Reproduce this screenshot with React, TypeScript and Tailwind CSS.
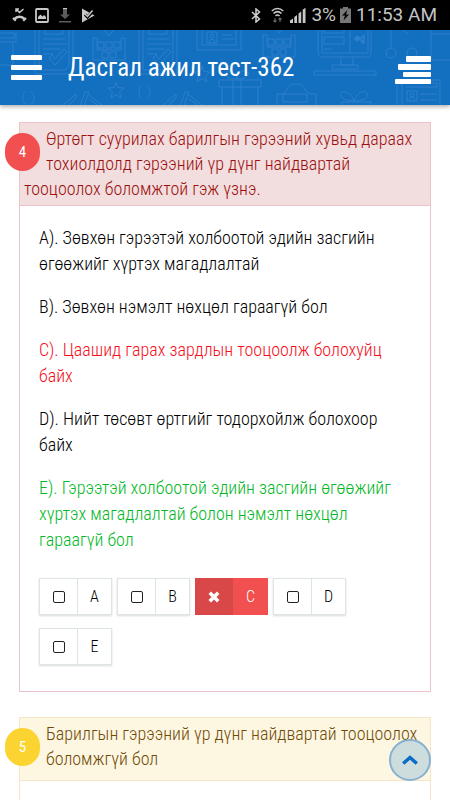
import type { ReactNode } from "react";
import clsx from "clsx";

interface Answer {
  letter: string;
  text: string;
  state?: "wrong" | "correct";
}

const answers: Answer[] = [
  { letter: "A", text: "Зөвхөн гэрээтэй холбоотой эдийн засгийн өгөөжийг хүртэх магадлалтай" },
  { letter: "B", text: "Зөвхөн нэмэлт нөхцөл гараагүй бол" },
  { letter: "C", text: "Цаашид гарах зардлын тооцоолж болохуйц байх", state: "wrong" },
  { letter: "D", text: "Нийт төсөвт өртгийг тодорхойлж болохоор байх" },
  {
    letter: "E",
    text: "Гэрээтэй холбоотой эдийн засгийн өгөөжийг хүртэх магадлалтай болон нэмэлт нөхцөл гараагүй бол",
    state: "correct",
  },
];

const StatusBar = () => (
  <div className="flex h-[30px] shrink-0 items-center justify-between bg-black pl-3 pr-[13px] font-['Roboto'] text-[19px] text-[#c4c4c4]">
    <div className="flex items-center gap-2">
      <svg width="15" height="14" viewBox="0 0 15 14" fill="none" stroke="#c8c8c8">
        <path d="M4 4V1h3M4 1l3.500 3.500L11.500 1" strokeWidth="1.500" />
        <path d="M2.500 11C5 8 10 8 12.500 11" strokeWidth="2.600" />
        <path d="M1 10l2.800 2.800M14 10l-2.800 2.800" strokeWidth="2.200" />
      </svg>
      <svg width="14" height="15" viewBox="0 0 14 15">
        <rect x="1" y="1" width="12" height="13" rx="1" fill="none" stroke="#c8c8c8" strokeWidth="1.8" />
        <path d="M3 11V9l2.500-2.500 2 2L9 7l2 2v2z" fill="#c8c8c8" />
      </svg>
      <svg className="ml-[2px]" width="12" height="15" viewBox="0 0 12 15" fill="#5c5c5c">
        <path d="M4 2h4v4.500h3L6 11 1 6.500h3z" />
        <rect x="4" width="4" height="1.500" fill="#c8c8c8" />
        <rect y="13" width="12" height="1.500" />
      </svg>
      <svg className="ml-[2px]" width="14" height="15" viewBox="0 0 14 15">
        <path d="M1 0.500L13.500 7.500 1 14.500z" fill="#c8c8c8" />
        <path d="M4 6.500l2.500 2.500L12 3" fill="none" stroke="#000" strokeWidth="3" />
        <path d="M4 6l2.500 2.500L11.500 2.500" fill="none" stroke="#c8c8c8" strokeWidth="1.500" />
      </svg>
    </div>
    <div className="flex items-center">
      <svg width="10" height="15" viewBox="0 0 10 15" fill="none" stroke="#d0d0d0" strokeWidth="1.500">
        <path d="M1 4l7.500 7L5 14V1l3.500 3L1 11" />
      </svg>
      <svg className="ml-[10px]" width="13" height="16" viewBox="0 0 13 16" fill="none" stroke="#c8c8c8" strokeWidth="1.500">
        <path d="M.8 4C4 .600 9 .600 12.200 4M2.500 6.500c2.400-2.400 5.600-2.400 8 0M4.500 9c1.300-1.300 2.700-1.300 4 0" />
        <path d="M4 11v4M2.500 13.500L4 15l1.500-1.500M9 15v-4M7.500 12.500L9 11l1.500 1.500" stroke="#666" strokeWidth="1.200" />
      </svg>
      <svg className="ml-[6px]" width="16" height="16" viewBox="0 0 16 16" fill="#c8c8c8">
        <path d="M0 16v-2.500l3-2V16zM4.300 16v-6l2.700-2V16zM8.500 16V6.500l2.700-2V16zM12.700 16V2.800L15.500.8V16z" />
      </svg>
      <span className="ml-[5px]">3%</span>
      <svg className="ml-1" width="11" height="16" viewBox="0 0 11 16">
        <path d="M3 0h5v1.500h3V16H0V1.500h3z" fill="#777" />
        <path d="M7.500 3L2 8.500h3L3.500 13.500 9 7.500H6z" fill="#000" />
      </svg>
      <span className="ml-[5px]">11:53 AM</span>
    </div>
  </div>
);

// faint doodles behind the title
const HeaderPattern = () => (
  <svg
    className="absolute left-0 top-0"
    width="450"
    height="75"
    viewBox="0 0 450 75"
    fill="none"
    stroke="#2d80ca"
    strokeWidth="1"
    aria-hidden="true"
  >
    <defs>
      <g id="clipboard">
        <path d="M0-2v46h38V-2M4-2v42h26l4-4V-2M10-2v6h18v-6M8 9h22M8 14h24M8 19h18M8 24h10" />
        <path d="M14 28l6 7 12-13-3-3-9 10-3-4z" />
      </g>
      <g id="calendar">
        <path d="M0 30V8h4v12h24V8h4v22zM10-2l6 8 6-8M5 12h6v6H5zM13 12h6v6h-6zM21 12h6v6h-6zM9 22h6v6H9zM17 22h6v6h-6z" />
      </g>
      <g id="braces">
        <path d="M4 0C0 0 3 5 0 6c3 1 0 6 4 6M9 0c4 0 1 5 4 6-3 1 0 6-4 6" />
      </g>
      <path id="star" d="M8 0l2 5.500 6 .500-4.500 4L13 16l-5-3.500L3 16l1.500-6L0 6l6-.500z" />
      <g id="codetag">
        <path d="M0 14L14 2v4L6 14M18 14L23 0h4L22 14M27 7l10 7M27 3l14 11" />
      </g>
    </defs>
    <path d="M0 3h14v5H0M0 12h16V3M13 12v23H0" />
    <use href="#clipboard" x="35" />
    <use href="#calendar" x="93" y="0" />
    <use href="#clipboard" x="139" />
    <use href="#braces" x="22" y="62" />
    <use href="#star" x="108" y="52" />
    <use href="#codetag" x="62" y="62" />
    <use href="#braces" x="138" y="56" />
    <use href="#codetag" x="162" y="62" />
    <use href="#star" x="194" y="36" />
    <path d="M197 0v20h44V0M202 0v15h34V0M207 2h10v11h-10zM212 4a2 2 0 100 4 2 2 0 000-4M209 13c0-5 6-5 6 0M222 5h10M222 9h12" />
    <use href="#calendar" x="263" y="-3" />
    <path d="M219 50h42v7h-42zM222 57v18M258 57v18M233 50v25M241 50v25M237 49c-14 0-14-9-6-8 4 1 5 4 6 8 1-4 2-7 6-8 8-1 8 8-6 8z" />
    <path d="M277 75V64h6l4-4c0-8 18-8 18 0l5 4h6v11M283 64h24v8h-24z" />
    <path d="M318 0v22c0 3 2 5 4 5h45c3 0 4-2 4-5V0M322 0v23h46V0M350 0v23M324 0v3h20V0M324 7h20v7h-20zM324 19h8M341 27v8h12v-8M332 35h26v4h-26zM314 41h62v4h-62z" />
    <path d="M355 7l3-1 6 6v-6l-6 5-3-1zM364 5v9l-3-2V7z" fill="#2d80ca" />
    <path d="M391 0v18M391 18a5 5 0 100 10 5 5 0 000-10M403 0l5 4M412 18a5 5 0 100 10 5 5 0 000-10" />
    <path d="M431 0v30h19M431 4h19" />
    <path d="M342 72h29v5h-29zM354 71c-15 0-17-10-9-9 5 1 8 5 9 9 3-8 9-12 13-8 3 5-4 8-13 8z" />
    <path d="M397 75V55M402 75V50h38v25M406 53h31v4h-31M407 61h10v10h-10zM412 63a2 2 0 100 4 2 2 0 000-4M409 71c0-5 6-5 6 0M420 64h17M420 70h17" />
  </svg>
);

const Header = () => (
  <header className="relative z-10 h-[75px] shrink-0 bg-[#136fc0] shadow-[0_2px_4px_rgba(0,0,0,0.3)]">
    <HeaderPattern />
    <div className="relative flex h-full items-center pl-[11px] pr-[19px]">
      <button type="button" aria-label="Цэс" className="flex w-[31px] shrink-0 flex-col gap-[5px]">
        <span className="h-[5px] rounded-[1px] bg-white" />
        <span className="h-[5px] rounded-[1px] bg-white" />
        <span className="h-[5px] rounded-[1px] bg-white" />
      </button>
      <h1 className="ml-[26px] flex-1 text-[25px] leading-[30px] text-white">Дасгал ажил тест-362</h1>
      <button type="button" aria-label="Жагсаалт" className="flex w-9 shrink-0 flex-col items-end gap-[2px] pt-1">
        <span className="h-[6px] w-[25px] rounded-[1px] bg-white" />
        <span className="h-[6px] w-[33px] rounded-[1px] bg-white" />
        <span className="h-[5px] w-[28px] rounded-[1px] bg-white" />
        <span className="h-[5px] w-[36px] rounded-[1px] bg-white" />
      </button>
    </div>
  </header>
);

interface QuestionProps {
  number: number;
  title: string;
  tone: "red" | "yellow";
  className?: string;
  children?: ReactNode;
}

const Question = ({ number, title, tone, className, children }: QuestionProps) => (
  <section className={clsx("border", tone === "red" ? "border-[#edc3ca]" : "border-[#f8e5c9]", className)}>
    <div
      className={clsx(
        "min-h-[63px] border-b pb-1 pl-1 pr-2 pt-[3px]",
        tone === "red" ? "border-[#edc3ca] bg-[#f2dede] text-[#9c0f0f]" : "border-[#f8e5c9] bg-[#fdf6e1] text-[#704a08]",
      )}
    >
      <span
        className={clsx(
          "float-left -ml-[19px] mr-[6px] mt-[7px] flex h-[38px] w-[35px] items-center justify-center rounded-full text-[15px] text-white",
          tone === "red" ? "bg-[#f25050]" : "bg-[#fbd431]",
        )}
      >
        {number}
      </span>
      <h2 className="text-[18px] font-light leading-[25px]">{title}</h2>
    </div>
    {children}
  </section>
);

const AnswerBox = ({ letter, state }: Answer) => {
  const wrong = state === "wrong";
  return (
    <label
      className={clsx(
        "relative flex h-[37px] w-[73px] text-[16px]",
        wrong ? "bg-[#f25050] text-white" : "border border-[#dce4e6] bg-white text-black shadow-[0_1px_2px_rgba(0,0,0,0.15)]",
      )}
    >
      <span
        className={clsx(
          "flex w-[38px] items-center justify-center",
          wrong ? "bg-[#d94848]" : "border-r border-[#dce4e6]",
        )}
      >
        <input
          type="checkbox"
          defaultChecked={wrong}
          className={wrong ? "sr-only" : "h-3 w-3 appearance-none rounded-[2px] border border-[#222]"}
        />
        {wrong && (
          <svg width="12" height="12" viewBox="0 0 12 12" stroke="#fff" strokeWidth="3.500" strokeLinecap="square">
            <path d="M3 3l6 6M9 3l-6 6" />
          </svg>
        )}
      </span>
      <span className="flex flex-1 items-center justify-center font-light">{letter}</span>
    </label>
  );
};

export default function App() {
  return (
    <div className="flex min-h-screen flex-col bg-white font-['Roboto_Condensed',Roboto,sans-serif]">
      <StatusBar />
      <Header />
      <main className="flex flex-1 flex-col gap-[25px] px-[19px] pt-[17px]">
        <Question
          number={4}
          tone="red"
          title="Өртөгт суурилах барилгын гэрээний хувьд дараах тохиолдолд гэрээний үр дүнг найдвартай тооцоолох боломжтой гэж үзнэ."
        >
          <div className="pb-[26px] pl-[19px] pr-8 pt-[19px]">
            <div className="flex flex-col gap-[17px] text-[18px] font-light leading-[26px]">
              {answers.map((a) => (
                <p
                  key={a.letter}
                  className={clsx(
                    !a.state && "text-black",
                    a.state === "wrong" && "text-[#f50f1c]",
                    a.state === "correct" && "text-[#04b827]",
                  )}
                >
                  {`${a.letter}). ${a.text}`}
                </p>
              ))}
            </div>
            <div className="mt-[25px] flex flex-wrap gap-x-[5px] gap-y-[13px]">
              {answers.map((a) => (
                <AnswerBox key={a.letter} {...a} />
              ))}
            </div>
          </div>
        </Question>
        <Question
          number={5}
          tone="yellow"
          className="flex-1 border-b-0"
          title="Барилгын гэрээний үр дүнг найдвартай тооцоолох боломжгүй бол"
        />
      </main>
      <button
        type="button"
        aria-label="Дээш"
        className="fixed bottom-[19px] right-[19px] flex h-[42px] w-[42px] items-center justify-center rounded-full border-2 border-[#86b1d2] bg-[#cddcdd]"
      >
        <svg width="16" height="10" viewBox="0 0 16 10" fill="none" stroke="#0a6cc4" strokeWidth="3.500">
          <path d="M1.200 8.500L8 2.500l6.800 6" />
        </svg>
      </button>
    </div>
  );
}
